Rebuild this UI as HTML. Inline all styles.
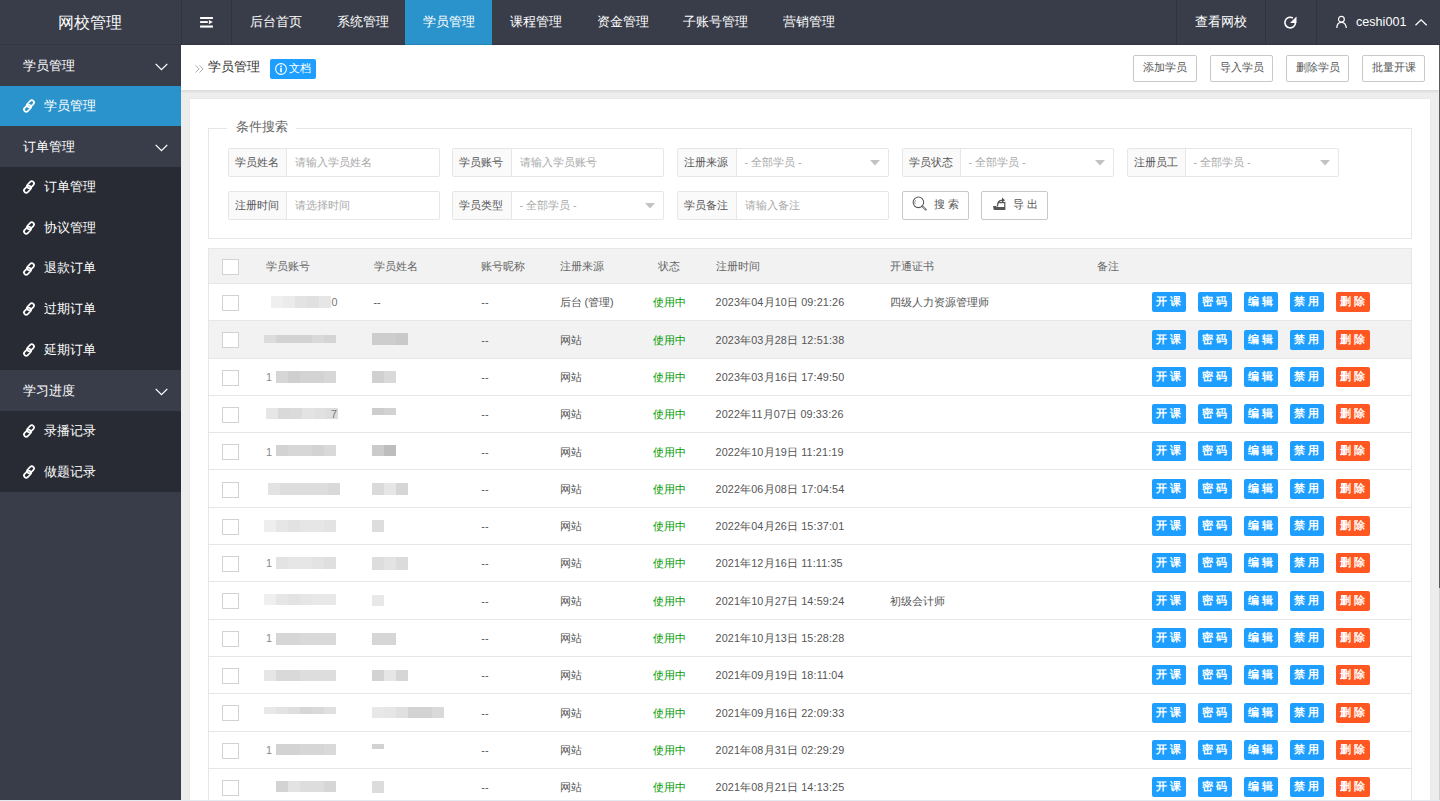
<!DOCTYPE html>
<html><head><meta charset="utf-8"><title>网校管理</title>
<style>
html,body{margin:0;padding:0;}
body{width:1440px;height:801px;overflow:hidden;position:relative;background:#EDEDED;font-family:"Liberation Sans", sans-serif;}
.ab{position:absolute;}
.t{position:absolute;white-space:nowrap;line-height:1;}
svg{position:absolute;overflow:visible;}
</style></head><body>

<div class="ab" style="left:0;top:0;width:1440px;height:45px;background:#393D49;"></div>
<div class="t" style="left:-1px;width:181px;text-align:center;top:14px;font-size:16.4px;color:#fff;">网校管理</div>
<div class="ab" style="left:181px;top:0;width:1px;height:45px;background:#30343e;"></div>
<div class="ab" style="left:231px;top:0;width:1px;height:45px;background:#30343e;"></div>
<div class="ab" style="left:1176px;top:0;width:1px;height:45px;background:#30343e;"></div>
<div class="ab" style="left:1265px;top:0;width:1px;height:45px;background:#30343e;"></div>
<div class="ab" style="left:1316px;top:0;width:1px;height:45px;background:#30343e;"></div>
<svg style="left:200px;top:16px" width="14" height="13" viewBox="0 0 14 13"><rect x="0.1" y="1" width="12.8" height="2" fill="#fff"/><rect x="0.1" y="5.1" width="7.7" height="1.9" fill="#fff"/><path d="M8.9 3.9 L12.8 6.05 L8.9 8.2Z" fill="#fff"/><rect x="0.1" y="9.5" width="12.8" height="2.1" fill="#fff"/></svg>
<div class="ab" style="left:405px;top:0;width:87px;height:45px;background:#2A93CC;"></div>
<div class="t" style="left:250px;top:15.5px;font-size:12.6px;color:#fff;">后台首页</div>
<div class="t" style="left:336.7px;top:15.5px;font-size:12.6px;color:#fff;">系统管理</div>
<div class="t" style="left:423.3px;top:15.5px;font-size:12.6px;color:#fff;">学员管理</div>
<div class="t" style="left:510px;top:15.5px;font-size:12.6px;color:#fff;">课程管理</div>
<div class="t" style="left:596.7px;top:15.5px;font-size:12.6px;color:#fff;">资金管理</div>
<div class="t" style="left:683.3px;top:15.5px;font-size:12.6px;color:#fff;">子账号管理</div>
<div class="t" style="left:782.7px;top:15.5px;font-size:12.6px;color:#fff;">营销管理</div>
<div class="ab" style="left:0;top:44px;width:1440px;height:1px;background:rgba(0,0,0,.08);"></div>
<div class="t" style="left:1195px;top:15.5px;font-size:12.6px;color:#fff;">查看网校</div>
<svg style="left:1284px;top:15.5px" width="13" height="13" viewBox="0 0 13 13"><path d="M11.5 6.6 A5.3 5.3 0 1 1 8.85 2.0" fill="none" stroke="#fff" stroke-width="1.6"/><path d="M6.0 6.9 L12.5 0.4 L12.5 6.9Z" fill="#fff"/></svg>
<svg style="left:1336px;top:15px" width="12" height="14" viewBox="0 0 12 14"><circle cx="5.4" cy="4.2" r="2.9" fill="none" stroke="#fff" stroke-width="1.2"/><path d="M0.8 13 C0.9 9.4 2.6 7.3 5.4 7.3 C8.2 7.3 9.9 9.4 10.4 13" fill="none" stroke="#fff" stroke-width="1.2"/></svg>
<div class="t" style="left:1356px;top:16.4px;font-size:12.6px;color:#fff;">ceshi001</div>
<svg style="left:1415px;top:19px" width="13" height="7" viewBox="0 0 13 7"><path d="M0.5 6.2 L6.1 0.8 L11.7 6.2" fill="none" stroke="#fff" stroke-width="1.3"/></svg>
<div class="ab" style="left:0;top:45px;width:181px;height:756px;background:#393D49;"></div>
<div class="ab" style="left:0;top:166.92px;width:181px;height:203.20px;background:#282B33;"></div>
<div class="ab" style="left:0;top:410.76px;width:181px;height:81.28px;background:#282B33;"></div>
<div class="ab" style="left:0;top:85.64px;width:181px;height:40.64px;background:#2A93CC;"></div>
<div class="t" style="left:22.7px;top:60.20px;font-size:12.6px;color:#fff;">学员管理</div>
<svg style="left:155px;top:63.00px" width="13" height="8" viewBox="0 0 13 8"><path d="M0.7 0.9 L6.5 6.7 L12.3 0.9" fill="none" stroke="#fff" stroke-width="1.3"/></svg>
<svg style="left:22px;top:99.14px" width="14" height="14" viewBox="0 0 14 14"><rect x="-4" y="-2.2" width="8" height="4.4" rx="2.2" transform="translate(5.5 9.2) rotate(-45)" fill="none" stroke="#fff" stroke-width="1.7"/><rect x="-4" y="-2.2" width="8" height="4.4" rx="2.2" transform="translate(8.5 4.8) rotate(-45)" fill="none" stroke="#fff" stroke-width="1.7"/></svg>
<div class="t" style="left:43.5px;top:99.84px;font-size:12.6px;color:#fff;">学员管理</div>
<div class="t" style="left:22.7px;top:141.48px;font-size:12.6px;color:#fff;">订单管理</div>
<svg style="left:155px;top:144.28px" width="13" height="8" viewBox="0 0 13 8"><path d="M0.7 0.9 L6.5 6.7 L12.3 0.9" fill="none" stroke="#fff" stroke-width="1.3"/></svg>
<svg style="left:22px;top:180.42px" width="14" height="14" viewBox="0 0 14 14"><rect x="-4" y="-2.2" width="8" height="4.4" rx="2.2" transform="translate(5.5 9.2) rotate(-45)" fill="none" stroke="#fff" stroke-width="1.7"/><rect x="-4" y="-2.2" width="8" height="4.4" rx="2.2" transform="translate(8.5 4.8) rotate(-45)" fill="none" stroke="#fff" stroke-width="1.7"/></svg>
<div class="t" style="left:43.5px;top:181.12px;font-size:12.6px;color:#fff;">订单管理</div>
<svg style="left:22px;top:221.06px" width="14" height="14" viewBox="0 0 14 14"><rect x="-4" y="-2.2" width="8" height="4.4" rx="2.2" transform="translate(5.5 9.2) rotate(-45)" fill="none" stroke="#fff" stroke-width="1.7"/><rect x="-4" y="-2.2" width="8" height="4.4" rx="2.2" transform="translate(8.5 4.8) rotate(-45)" fill="none" stroke="#fff" stroke-width="1.7"/></svg>
<div class="t" style="left:43.5px;top:221.76px;font-size:12.6px;color:#fff;">协议管理</div>
<svg style="left:22px;top:261.70px" width="14" height="14" viewBox="0 0 14 14"><rect x="-4" y="-2.2" width="8" height="4.4" rx="2.2" transform="translate(5.5 9.2) rotate(-45)" fill="none" stroke="#fff" stroke-width="1.7"/><rect x="-4" y="-2.2" width="8" height="4.4" rx="2.2" transform="translate(8.5 4.8) rotate(-45)" fill="none" stroke="#fff" stroke-width="1.7"/></svg>
<div class="t" style="left:43.5px;top:262.40px;font-size:12.6px;color:#fff;">退款订单</div>
<svg style="left:22px;top:302.34px" width="14" height="14" viewBox="0 0 14 14"><rect x="-4" y="-2.2" width="8" height="4.4" rx="2.2" transform="translate(5.5 9.2) rotate(-45)" fill="none" stroke="#fff" stroke-width="1.7"/><rect x="-4" y="-2.2" width="8" height="4.4" rx="2.2" transform="translate(8.5 4.8) rotate(-45)" fill="none" stroke="#fff" stroke-width="1.7"/></svg>
<div class="t" style="left:43.5px;top:303.04px;font-size:12.6px;color:#fff;">过期订单</div>
<svg style="left:22px;top:342.98px" width="14" height="14" viewBox="0 0 14 14"><rect x="-4" y="-2.2" width="8" height="4.4" rx="2.2" transform="translate(5.5 9.2) rotate(-45)" fill="none" stroke="#fff" stroke-width="1.7"/><rect x="-4" y="-2.2" width="8" height="4.4" rx="2.2" transform="translate(8.5 4.8) rotate(-45)" fill="none" stroke="#fff" stroke-width="1.7"/></svg>
<div class="t" style="left:43.5px;top:343.68px;font-size:12.6px;color:#fff;">延期订单</div>
<div class="t" style="left:22.7px;top:385.32px;font-size:12.6px;color:#fff;">学习进度</div>
<svg style="left:155px;top:388.12px" width="13" height="8" viewBox="0 0 13 8"><path d="M0.7 0.9 L6.5 6.7 L12.3 0.9" fill="none" stroke="#fff" stroke-width="1.3"/></svg>
<svg style="left:22px;top:424.26px" width="14" height="14" viewBox="0 0 14 14"><rect x="-4" y="-2.2" width="8" height="4.4" rx="2.2" transform="translate(5.5 9.2) rotate(-45)" fill="none" stroke="#fff" stroke-width="1.7"/><rect x="-4" y="-2.2" width="8" height="4.4" rx="2.2" transform="translate(8.5 4.8) rotate(-45)" fill="none" stroke="#fff" stroke-width="1.7"/></svg>
<div class="t" style="left:43.5px;top:424.96px;font-size:12.6px;color:#fff;">录播记录</div>
<svg style="left:22px;top:464.90px" width="14" height="14" viewBox="0 0 14 14"><rect x="-4" y="-2.2" width="8" height="4.4" rx="2.2" transform="translate(5.5 9.2) rotate(-45)" fill="none" stroke="#fff" stroke-width="1.7"/><rect x="-4" y="-2.2" width="8" height="4.4" rx="2.2" transform="translate(8.5 4.8) rotate(-45)" fill="none" stroke="#fff" stroke-width="1.7"/></svg>
<div class="t" style="left:43.5px;top:465.60px;font-size:12.6px;color:#fff;">做题记录</div>
<div class="ab" style="left:181px;top:45px;width:1258px;height:45px;background:#fff;box-shadow:0 1px 3px rgba(0,0,0,.12);"></div>
<div class="ab" style="left:1439px;top:45px;width:1px;height:543px;background:#5a5a5a;"></div>
<div class="ab" style="left:1439px;top:588px;width:1px;height:213px;background:#cfcfcf;"></div>
<svg style="left:194.5px;top:65px" width="9" height="8" viewBox="0 0 9 8"><path d="M0.5 0.3 L4 3.9 L0.5 7.5 M4.5 0.3 L8 3.9 L4.5 7.5" fill="none" stroke="#AAA" stroke-width="1"/></svg>
<div class="t" style="left:208px;top:61px;font-size:12.6px;color:#333;">学员管理</div>
<div class="ab" style="left:270px;top:59px;width:46px;height:20px;background:#1E9FFF;border-radius:2px;"></div>
<svg style="left:274.5px;top:63px" width="12" height="12" viewBox="0 0 12 12"><circle cx="6" cy="6" r="5.4" fill="none" stroke="#fff" stroke-width="1.1"/><circle cx="6" cy="3.4" r="0.9" fill="#fff"/><rect x="5.2" y="5" width="1.6" height="4.2" fill="#fff"/></svg>
<div class="t" style="left:289px;top:63px;font-size:11.2px;color:#fff;">文档</div>
<div class="ab" style="left:1133px;top:55px;width:62px;height:25px;border:1px solid #C9C9C9;border-radius:2px;background:#fff;"></div>
<div class="t" style="left:1133px;width:64px;text-align:center;top:62px;font-size:10.8px;color:#555;">添加学员</div>
<div class="ab" style="left:1210px;top:55px;width:61px;height:25px;border:1px solid #C9C9C9;border-radius:2px;background:#fff;"></div>
<div class="t" style="left:1210px;width:63px;text-align:center;top:62px;font-size:10.8px;color:#555;">导入学员</div>
<div class="ab" style="left:1286px;top:55px;width:61px;height:25px;border:1px solid #C9C9C9;border-radius:2px;background:#fff;"></div>
<div class="t" style="left:1286px;width:63px;text-align:center;top:62px;font-size:10.8px;color:#555;">删除学员</div>
<div class="ab" style="left:1362px;top:55px;width:61px;height:25px;border:1px solid #C9C9C9;border-radius:2px;background:#fff;"></div>
<div class="t" style="left:1362px;width:63px;text-align:center;top:62px;font-size:10.8px;color:#555;">批量开课</div>
<div class="ab" style="left:190px;top:99px;width:1240px;height:702px;background:#fff;box-shadow:0 0 2px rgba(0,0,0,.05);"></div>
<div class="ab" style="left:208px;top:128px;width:1202px;height:109px;border:1px solid #E6E6E6;"></div>
<div class="ab" style="left:227px;top:120px;width:69px;height:12px;background:#fff;"></div>
<div class="t" style="left:236px;top:120.5px;font-size:12.6px;color:#666;">条件搜索</div>
<div class="ab" style="left:228px;top:148px;width:210px;height:27px;border:1px solid #E6E6E6;border-radius:2px;background:#fff;"></div>
<div class="ab" style="left:229px;top:149px;width:57px;height:27px;background:#FAFAFA;border-right:1px solid #E6E6E6;"></div>
<div class="t" style="left:235.3px;top:156.6px;font-size:10.8px;color:#555;">学员姓名</div>
<div class="t" style="left:294.5px;top:156.8px;font-size:10.8px;color:#A9A9A9;">请输入学员姓名</div>
<div class="ab" style="left:452px;top:148px;width:210px;height:27px;border:1px solid #E6E6E6;border-radius:2px;background:#fff;"></div>
<div class="ab" style="left:453px;top:149px;width:58px;height:27px;background:#FAFAFA;border-right:1px solid #E6E6E6;"></div>
<div class="t" style="left:459.3px;top:156.6px;font-size:10.8px;color:#555;">学员账号</div>
<div class="t" style="left:519.5px;top:156.8px;font-size:10.8px;color:#A9A9A9;">请输入学员账号</div>
<div class="ab" style="left:677px;top:148px;width:210px;height:27px;border:1px solid #E6E6E6;border-radius:2px;background:#fff;"></div>
<div class="ab" style="left:678px;top:149px;width:58px;height:27px;background:#FAFAFA;border-right:1px solid #E6E6E6;"></div>
<div class="t" style="left:684.3px;top:156.6px;font-size:10.8px;color:#555;">注册来源</div>
<div class="t" style="left:744.5px;top:156.8px;font-size:10.8px;color:#A9A9A9;">- 全部学员 -</div>
<svg style="left:870px;top:160px" width="10" height="6" viewBox="0 0 10 6"><path d="M0 0 L10 0 L5 5.5Z" fill="#C2C2C2"/></svg>
<div class="ab" style="left:902px;top:148px;width:210px;height:27px;border:1px solid #E6E6E6;border-radius:2px;background:#fff;"></div>
<div class="ab" style="left:903px;top:149px;width:57px;height:27px;background:#FAFAFA;border-right:1px solid #E6E6E6;"></div>
<div class="t" style="left:909.3px;top:156.6px;font-size:10.8px;color:#555;">学员状态</div>
<div class="t" style="left:968.5px;top:156.8px;font-size:10.8px;color:#A9A9A9;">- 全部学员 -</div>
<svg style="left:1095px;top:160px" width="10" height="6" viewBox="0 0 10 6"><path d="M0 0 L10 0 L5 5.5Z" fill="#C2C2C2"/></svg>
<div class="ab" style="left:1127px;top:148px;width:210px;height:27px;border:1px solid #E6E6E6;border-radius:2px;background:#fff;"></div>
<div class="ab" style="left:1128px;top:149px;width:57px;height:27px;background:#FAFAFA;border-right:1px solid #E6E6E6;"></div>
<div class="t" style="left:1134.3px;top:156.6px;font-size:10.8px;color:#555;">注册员工</div>
<div class="t" style="left:1193.5px;top:156.8px;font-size:10.8px;color:#A9A9A9;">- 全部学员 -</div>
<svg style="left:1320px;top:160px" width="10" height="6" viewBox="0 0 10 6"><path d="M0 0 L10 0 L5 5.5Z" fill="#C2C2C2"/></svg>
<div class="ab" style="left:228px;top:191px;width:210px;height:27px;border:1px solid #E6E6E6;border-radius:2px;background:#fff;"></div>
<div class="ab" style="left:229px;top:192px;width:57px;height:27px;background:#FAFAFA;border-right:1px solid #E6E6E6;"></div>
<div class="t" style="left:235.3px;top:199.6px;font-size:10.8px;color:#555;">注册时间</div>
<div class="t" style="left:294.5px;top:199.8px;font-size:10.8px;color:#A9A9A9;">请选择时间</div>
<div class="ab" style="left:452px;top:191px;width:210px;height:27px;border:1px solid #E6E6E6;border-radius:2px;background:#fff;"></div>
<div class="ab" style="left:453px;top:192px;width:58px;height:27px;background:#FAFAFA;border-right:1px solid #E6E6E6;"></div>
<div class="t" style="left:459.3px;top:199.6px;font-size:10.8px;color:#555;">学员类型</div>
<div class="t" style="left:519.5px;top:199.8px;font-size:10.8px;color:#A9A9A9;">- 全部学员 -</div>
<svg style="left:645px;top:203px" width="10" height="6" viewBox="0 0 10 6"><path d="M0 0 L10 0 L5 5.5Z" fill="#C2C2C2"/></svg>
<div class="ab" style="left:677px;top:191px;width:210px;height:27px;border:1px solid #E6E6E6;border-radius:2px;background:#fff;"></div>
<div class="ab" style="left:678px;top:192px;width:58px;height:27px;background:#FAFAFA;border-right:1px solid #E6E6E6;"></div>
<div class="t" style="left:684.3px;top:199.6px;font-size:10.8px;color:#555;">学员备注</div>
<div class="t" style="left:744.5px;top:199.8px;font-size:10.8px;color:#A9A9A9;">请输入备注</div>
<div class="ab" style="left:902px;top:191px;width:65px;height:27px;border:1px solid #C9C9C9;border-radius:2px;background:#fff;"></div>
<div class="ab" style="left:981px;top:191px;width:65px;height:27px;border:1px solid #C9C9C9;border-radius:2px;background:#fff;"></div>
<svg style="left:912px;top:196px" width="15" height="15" viewBox="0 0 15 15"><circle cx="6.4" cy="6.3" r="5.3" fill="none" stroke="#555" stroke-width="1.05"/><path d="M3.3 8.2 A3.4 3.4 0 0 1 3.6 4.2" fill="none" stroke="#777" stroke-width="0.8"/><path d="M10.2 10.1 L13.8 13.6" stroke="#666" stroke-width="2" stroke-linecap="round"/><path d="M10.6 10.5 L13.4 13.2" stroke="#ddd" stroke-width="0.7"/></svg>
<div class="t" style="left:934px;top:198.5px;font-size:10.8px;color:#555;letter-spacing:3px;">搜索</div>
<svg style="left:993px;top:197px" width="13" height="14" viewBox="0 0 13 14"><path d="M0 9 L3.2 9 L3.6 10 L12.4 10 L12.4 13 L0.8 13 Z" fill="#555"/><path d="M6.2 5.6 L11.8 5.6 L11.8 10" fill="none" stroke="#555" stroke-width="1.2"/><path d="M4.4 9.6 C4.4 5.6 5.8 3.2 9.4 3.2" fill="none" stroke="#555" stroke-width="1.4"/><path d="M9 0.6 L12 3.2 L9 5.8Z" fill="#555"/></svg>
<div class="t" style="left:1013px;top:198.5px;font-size:10.8px;color:#555;letter-spacing:3px;">导出</div>
<div class="ab" style="left:208px;top:248px;width:1202px;height:560px;border:1px solid #E6E6E6;"></div>
<div class="ab" style="left:209px;top:249px;width:1202px;height:34px;background:#F2F2F2;border-bottom:1px solid #E6E6E6;"></div>
<div class="ab" style="left:222px;top:259px;width:15px;height:14px;border:1px solid #D2D2D2;background:#fff;"></div>
<div class="t" style="left:265.9px;top:260.8px;font-size:10.8px;color:#666;">学员账号</div>
<div class="t" style="left:373.5px;top:260.8px;font-size:10.8px;color:#666;">学员姓名</div>
<div class="t" style="left:481.3px;top:260.8px;font-size:10.8px;color:#666;">账号昵称</div>
<div class="t" style="left:559.5px;top:260.8px;font-size:10.8px;color:#666;">注册来源</div>
<div class="t" style="left:657.7px;top:260.8px;font-size:10.8px;color:#666;">状态</div>
<div class="t" style="left:715.5px;top:260.8px;font-size:10.8px;color:#666;">注册时间</div>
<div class="t" style="left:890px;top:260.8px;font-size:10.8px;color:#666;">开通证书</div>
<div class="t" style="left:1097px;top:260.8px;font-size:10.8px;color:#666;">备注</div>
<div class="ab" style="left:209px;top:284.00px;width:1202px;height:36.30px;background:#fff;border-bottom:1px solid #E6E6E6;"></div>
<div class="ab" style="left:222px;top:295px;width:15px;height:14px;border:1px solid #D2D2D2;background:#fff;"></div>
<div class="ab" style="left:271px;top:296.00px;width:12px;height:12px;background:#EFEFEF;"></div>
<div class="ab" style="left:283px;top:296.00px;width:12px;height:12px;background:#EBEBEB;"></div>
<div class="ab" style="left:295px;top:296.00px;width:12px;height:12px;background:#E3E3E3;"></div>
<div class="ab" style="left:307px;top:296.00px;width:12px;height:12px;background:#E0E0E0;"></div>
<div class="ab" style="left:319px;top:296.00px;width:12px;height:12px;background:#E6E6E6;"></div>
<div class="t" style="left:331.5px;top:297.30px;font-size:10.8px;color:#777;">0</div>
<div class="t" style="left:373.5px;top:297.30px;font-size:10.8px;color:#555;">--</div>
<div class="t" style="left:481.3px;top:297.30px;font-size:10.8px;color:#555;">--</div>
<div class="t" style="left:559.5px;top:297.30px;font-size:10.8px;color:#555;">后台 (管理)</div>
<div class="t" style="left:652.6px;top:297.30px;font-size:10.8px;color:#009900;">使用中</div>
<div class="t" style="left:715.5px;top:297.30px;font-size:10.8px;color:#555;letter-spacing:0.14px;">2023年04月10日 09:21:26</div>
<div class="t" style="left:890px;top:297.30px;font-size:10.8px;color:#555;">四级人力资源管理师</div>
<div class="ab" style="left:1152px;top:292px;width:34px;height:20px;background:#1E9FFF;border-radius:2px;"></div>
<div class="t" style="left:1156px;top:295.6px;font-size:10.8px;color:#fff;letter-spacing:3px;font-weight:bold;">开课</div>
<div class="ab" style="left:1198px;top:292px;width:34px;height:20px;background:#1E9FFF;border-radius:2px;"></div>
<div class="t" style="left:1202px;top:295.6px;font-size:10.8px;color:#fff;letter-spacing:3px;font-weight:bold;">密码</div>
<div class="ab" style="left:1244px;top:292px;width:34px;height:20px;background:#1E9FFF;border-radius:2px;"></div>
<div class="t" style="left:1248px;top:295.6px;font-size:10.8px;color:#fff;letter-spacing:3px;font-weight:bold;">编辑</div>
<div class="ab" style="left:1290px;top:292px;width:34px;height:20px;background:#1E9FFF;border-radius:2px;"></div>
<div class="t" style="left:1294px;top:295.6px;font-size:10.8px;color:#fff;letter-spacing:3px;font-weight:bold;">禁用</div>
<div class="ab" style="left:1336px;top:292px;width:34px;height:20px;background:#FF5722;border-radius:2px;"></div>
<div class="t" style="left:1340px;top:295.6px;font-size:10.8px;color:#fff;letter-spacing:3px;font-weight:bold;">删除</div>
<div class="ab" style="left:209px;top:321.30px;width:1202px;height:36.30px;background:#F2F2F2;border-bottom:1px solid #E6E6E6;"></div>
<div class="ab" style="left:222px;top:332px;width:15px;height:14px;border:1px solid #D2D2D2;background:#fff;"></div>
<div class="ab" style="left:264px;top:335.30px;width:12px;height:8px;background:#DCDCDC;"></div>
<div class="ab" style="left:276px;top:335.30px;width:12px;height:8px;background:#D3D3D3;"></div>
<div class="ab" style="left:288px;top:335.30px;width:12px;height:8px;background:#D3D3D3;"></div>
<div class="ab" style="left:300px;top:335.30px;width:12px;height:8px;background:#D3D3D3;"></div>
<div class="ab" style="left:312px;top:335.30px;width:12px;height:8px;background:#D9D9D9;"></div>
<div class="ab" style="left:324px;top:335.30px;width:12px;height:8px;background:#D5D5D5;"></div>
<div class="ab" style="left:372px;top:333.30px;width:12px;height:12px;background:#CDCDCD;"></div>
<div class="ab" style="left:384px;top:333.30px;width:12px;height:12px;background:#CDCDCD;"></div>
<div class="ab" style="left:396px;top:333.30px;width:12px;height:12px;background:#C9C9C9;"></div>
<div class="t" style="left:481.3px;top:334.60px;font-size:10.8px;color:#555;">--</div>
<div class="t" style="left:559.5px;top:334.60px;font-size:10.8px;color:#555;">网站</div>
<div class="t" style="left:652.6px;top:334.60px;font-size:10.8px;color:#009900;">使用中</div>
<div class="t" style="left:715.5px;top:334.60px;font-size:10.8px;color:#555;letter-spacing:0.14px;">2023年03月28日 12:51:38</div>
<div class="ab" style="left:1152px;top:330px;width:34px;height:20px;background:#1E9FFF;border-radius:2px;"></div>
<div class="t" style="left:1156px;top:333.6px;font-size:10.8px;color:#fff;letter-spacing:3px;font-weight:bold;">开课</div>
<div class="ab" style="left:1198px;top:330px;width:34px;height:20px;background:#1E9FFF;border-radius:2px;"></div>
<div class="t" style="left:1202px;top:333.6px;font-size:10.8px;color:#fff;letter-spacing:3px;font-weight:bold;">密码</div>
<div class="ab" style="left:1244px;top:330px;width:34px;height:20px;background:#1E9FFF;border-radius:2px;"></div>
<div class="t" style="left:1248px;top:333.6px;font-size:10.8px;color:#fff;letter-spacing:3px;font-weight:bold;">编辑</div>
<div class="ab" style="left:1290px;top:330px;width:34px;height:20px;background:#1E9FFF;border-radius:2px;"></div>
<div class="t" style="left:1294px;top:333.6px;font-size:10.8px;color:#fff;letter-spacing:3px;font-weight:bold;">禁用</div>
<div class="ab" style="left:1336px;top:330px;width:34px;height:20px;background:#FF5722;border-radius:2px;"></div>
<div class="t" style="left:1340px;top:333.6px;font-size:10.8px;color:#fff;letter-spacing:3px;font-weight:bold;">删除</div>
<div class="ab" style="left:209px;top:358.60px;width:1202px;height:36.30px;background:#fff;border-bottom:1px solid #E6E6E6;"></div>
<div class="ab" style="left:222px;top:370px;width:15px;height:14px;border:1px solid #D2D2D2;background:#fff;"></div>
<div class="ab" style="left:276px;top:370.60px;width:12px;height:12px;background:#D6D6D6;"></div>
<div class="ab" style="left:288px;top:370.60px;width:12px;height:12px;background:#CFCFCF;"></div>
<div class="ab" style="left:300px;top:370.60px;width:12px;height:12px;background:#D3D3D3;"></div>
<div class="ab" style="left:312px;top:370.60px;width:12px;height:12px;background:#D3D3D3;"></div>
<div class="ab" style="left:324px;top:370.60px;width:12px;height:12px;background:#D7D7D7;"></div>
<div class="t" style="left:266px;top:371.90px;font-size:10.8px;color:#888;">1</div>
<div class="ab" style="left:372px;top:370.60px;width:12px;height:12px;background:#D0D0D0;"></div>
<div class="ab" style="left:384px;top:370.60px;width:12px;height:12px;background:#D9D9D9;"></div>
<div class="t" style="left:481.3px;top:371.90px;font-size:10.8px;color:#555;">--</div>
<div class="t" style="left:559.5px;top:371.90px;font-size:10.8px;color:#555;">网站</div>
<div class="t" style="left:652.6px;top:371.90px;font-size:10.8px;color:#009900;">使用中</div>
<div class="t" style="left:715.5px;top:371.90px;font-size:10.8px;color:#555;letter-spacing:0.14px;">2023年03月16日 17:49:50</div>
<div class="ab" style="left:1152px;top:367px;width:34px;height:20px;background:#1E9FFF;border-radius:2px;"></div>
<div class="t" style="left:1156px;top:370.6px;font-size:10.8px;color:#fff;letter-spacing:3px;font-weight:bold;">开课</div>
<div class="ab" style="left:1198px;top:367px;width:34px;height:20px;background:#1E9FFF;border-radius:2px;"></div>
<div class="t" style="left:1202px;top:370.6px;font-size:10.8px;color:#fff;letter-spacing:3px;font-weight:bold;">密码</div>
<div class="ab" style="left:1244px;top:367px;width:34px;height:20px;background:#1E9FFF;border-radius:2px;"></div>
<div class="t" style="left:1248px;top:370.6px;font-size:10.8px;color:#fff;letter-spacing:3px;font-weight:bold;">编辑</div>
<div class="ab" style="left:1290px;top:367px;width:34px;height:20px;background:#1E9FFF;border-radius:2px;"></div>
<div class="t" style="left:1294px;top:370.6px;font-size:10.8px;color:#fff;letter-spacing:3px;font-weight:bold;">禁用</div>
<div class="ab" style="left:1336px;top:367px;width:34px;height:20px;background:#FF5722;border-radius:2px;"></div>
<div class="t" style="left:1340px;top:370.6px;font-size:10.8px;color:#fff;letter-spacing:3px;font-weight:bold;">删除</div>
<div class="ab" style="left:209px;top:395.90px;width:1202px;height:36.30px;background:#fff;border-bottom:1px solid #E6E6E6;"></div>
<div class="ab" style="left:222px;top:407px;width:15px;height:14px;border:1px solid #D2D2D2;background:#fff;"></div>
<div class="ab" style="left:266px;top:407.90px;width:12px;height:11px;background:#E6E6E6;"></div>
<div class="ab" style="left:278px;top:407.90px;width:12px;height:11px;background:#D9D9D9;"></div>
<div class="ab" style="left:290px;top:407.90px;width:12px;height:11px;background:#DBDBDB;"></div>
<div class="ab" style="left:302px;top:407.90px;width:12px;height:11px;background:#E3E3E3;"></div>
<div class="ab" style="left:314px;top:407.90px;width:12px;height:11px;background:#E0E0E0;"></div>
<div class="ab" style="left:326px;top:407.90px;width:12px;height:11px;background:#DDDDDD;"></div>
<div class="t" style="left:331px;top:409.20px;font-size:10.8px;color:#777;">7</div>
<div class="ab" style="left:372px;top:407.90px;width:12px;height:7px;background:#CDCDCD;"></div>
<div class="ab" style="left:384px;top:407.90px;width:12px;height:7px;background:#D2D2D2;"></div>
<div class="t" style="left:481.3px;top:409.20px;font-size:10.8px;color:#555;">--</div>
<div class="t" style="left:559.5px;top:409.20px;font-size:10.8px;color:#555;">网站</div>
<div class="t" style="left:652.6px;top:409.20px;font-size:10.8px;color:#009900;">使用中</div>
<div class="t" style="left:715.5px;top:409.20px;font-size:10.8px;color:#555;letter-spacing:0.14px;">2022年11月07日 09:33:26</div>
<div class="ab" style="left:1152px;top:404px;width:34px;height:20px;background:#1E9FFF;border-radius:2px;"></div>
<div class="t" style="left:1156px;top:407.6px;font-size:10.8px;color:#fff;letter-spacing:3px;font-weight:bold;">开课</div>
<div class="ab" style="left:1198px;top:404px;width:34px;height:20px;background:#1E9FFF;border-radius:2px;"></div>
<div class="t" style="left:1202px;top:407.6px;font-size:10.8px;color:#fff;letter-spacing:3px;font-weight:bold;">密码</div>
<div class="ab" style="left:1244px;top:404px;width:34px;height:20px;background:#1E9FFF;border-radius:2px;"></div>
<div class="t" style="left:1248px;top:407.6px;font-size:10.8px;color:#fff;letter-spacing:3px;font-weight:bold;">编辑</div>
<div class="ab" style="left:1290px;top:404px;width:34px;height:20px;background:#1E9FFF;border-radius:2px;"></div>
<div class="t" style="left:1294px;top:407.6px;font-size:10.8px;color:#fff;letter-spacing:3px;font-weight:bold;">禁用</div>
<div class="ab" style="left:1336px;top:404px;width:34px;height:20px;background:#FF5722;border-radius:2px;"></div>
<div class="t" style="left:1340px;top:407.6px;font-size:10.8px;color:#fff;letter-spacing:3px;font-weight:bold;">删除</div>
<div class="ab" style="left:209px;top:433.20px;width:1202px;height:36.30px;background:#fff;border-bottom:1px solid #E6E6E6;"></div>
<div class="ab" style="left:222px;top:444px;width:15px;height:14px;border:1px solid #D2D2D2;background:#fff;"></div>
<div class="ab" style="left:276px;top:445.20px;width:12px;height:11px;background:#D3D3D3;"></div>
<div class="ab" style="left:288px;top:445.20px;width:12px;height:11px;background:#D7D7D7;"></div>
<div class="ab" style="left:300px;top:445.20px;width:12px;height:11px;background:#D7D7D7;"></div>
<div class="ab" style="left:312px;top:445.20px;width:12px;height:11px;background:#D3D3D3;"></div>
<div class="ab" style="left:324px;top:445.20px;width:12px;height:11px;background:#D9D9D9;"></div>
<div class="t" style="left:266px;top:446.50px;font-size:10.8px;color:#888;">1</div>
<div class="ab" style="left:372px;top:445.20px;width:12px;height:11px;background:#CBCBCB;"></div>
<div class="ab" style="left:384px;top:445.20px;width:12px;height:11px;background:#BDBDBD;"></div>
<div class="t" style="left:481.3px;top:446.50px;font-size:10.8px;color:#555;">--</div>
<div class="t" style="left:559.5px;top:446.50px;font-size:10.8px;color:#555;">网站</div>
<div class="t" style="left:652.6px;top:446.50px;font-size:10.8px;color:#009900;">使用中</div>
<div class="t" style="left:715.5px;top:446.50px;font-size:10.8px;color:#555;letter-spacing:0.14px;">2022年10月19日 11:21:19</div>
<div class="ab" style="left:1152px;top:441px;width:34px;height:20px;background:#1E9FFF;border-radius:2px;"></div>
<div class="t" style="left:1156px;top:444.6px;font-size:10.8px;color:#fff;letter-spacing:3px;font-weight:bold;">开课</div>
<div class="ab" style="left:1198px;top:441px;width:34px;height:20px;background:#1E9FFF;border-radius:2px;"></div>
<div class="t" style="left:1202px;top:444.6px;font-size:10.8px;color:#fff;letter-spacing:3px;font-weight:bold;">密码</div>
<div class="ab" style="left:1244px;top:441px;width:34px;height:20px;background:#1E9FFF;border-radius:2px;"></div>
<div class="t" style="left:1248px;top:444.6px;font-size:10.8px;color:#fff;letter-spacing:3px;font-weight:bold;">编辑</div>
<div class="ab" style="left:1290px;top:441px;width:34px;height:20px;background:#1E9FFF;border-radius:2px;"></div>
<div class="t" style="left:1294px;top:444.6px;font-size:10.8px;color:#fff;letter-spacing:3px;font-weight:bold;">禁用</div>
<div class="ab" style="left:1336px;top:441px;width:34px;height:20px;background:#FF5722;border-radius:2px;"></div>
<div class="t" style="left:1340px;top:444.6px;font-size:10.8px;color:#fff;letter-spacing:3px;font-weight:bold;">删除</div>
<div class="ab" style="left:209px;top:470.50px;width:1202px;height:36.30px;background:#fff;border-bottom:1px solid #E6E6E6;"></div>
<div class="ab" style="left:222px;top:482px;width:15px;height:14px;border:1px solid #D2D2D2;background:#fff;"></div>
<div class="ab" style="left:268px;top:482.50px;width:12px;height:12px;background:#E3E3E3;"></div>
<div class="ab" style="left:280px;top:482.50px;width:12px;height:12px;background:#DDDDDD;"></div>
<div class="ab" style="left:292px;top:482.50px;width:12px;height:12px;background:#DDDDDD;"></div>
<div class="ab" style="left:304px;top:482.50px;width:12px;height:12px;background:#DDDDDD;"></div>
<div class="ab" style="left:316px;top:482.50px;width:12px;height:12px;background:#DDDDDD;"></div>
<div class="ab" style="left:328px;top:482.50px;width:12px;height:12px;background:#D9D9D9;"></div>
<div class="ab" style="left:372px;top:482.50px;width:12px;height:12px;background:#DADADA;"></div>
<div class="ab" style="left:384px;top:482.50px;width:12px;height:12px;background:#E6E6E6;"></div>
<div class="ab" style="left:396px;top:482.50px;width:12px;height:12px;background:#D6D6D6;"></div>
<div class="t" style="left:481.3px;top:483.80px;font-size:10.8px;color:#555;">--</div>
<div class="t" style="left:559.5px;top:483.80px;font-size:10.8px;color:#555;">网站</div>
<div class="t" style="left:652.6px;top:483.80px;font-size:10.8px;color:#009900;">使用中</div>
<div class="t" style="left:715.5px;top:483.80px;font-size:10.8px;color:#555;letter-spacing:0.14px;">2022年06月08日 17:04:54</div>
<div class="ab" style="left:1152px;top:479px;width:34px;height:20px;background:#1E9FFF;border-radius:2px;"></div>
<div class="t" style="left:1156px;top:482.6px;font-size:10.8px;color:#fff;letter-spacing:3px;font-weight:bold;">开课</div>
<div class="ab" style="left:1198px;top:479px;width:34px;height:20px;background:#1E9FFF;border-radius:2px;"></div>
<div class="t" style="left:1202px;top:482.6px;font-size:10.8px;color:#fff;letter-spacing:3px;font-weight:bold;">密码</div>
<div class="ab" style="left:1244px;top:479px;width:34px;height:20px;background:#1E9FFF;border-radius:2px;"></div>
<div class="t" style="left:1248px;top:482.6px;font-size:10.8px;color:#fff;letter-spacing:3px;font-weight:bold;">编辑</div>
<div class="ab" style="left:1290px;top:479px;width:34px;height:20px;background:#1E9FFF;border-radius:2px;"></div>
<div class="t" style="left:1294px;top:482.6px;font-size:10.8px;color:#fff;letter-spacing:3px;font-weight:bold;">禁用</div>
<div class="ab" style="left:1336px;top:479px;width:34px;height:20px;background:#FF5722;border-radius:2px;"></div>
<div class="t" style="left:1340px;top:482.6px;font-size:10.8px;color:#fff;letter-spacing:3px;font-weight:bold;">删除</div>
<div class="ab" style="left:209px;top:507.80px;width:1202px;height:36.30px;background:#fff;border-bottom:1px solid #E6E6E6;"></div>
<div class="ab" style="left:222px;top:519px;width:15px;height:14px;border:1px solid #D2D2D2;background:#fff;"></div>
<div class="ab" style="left:264px;top:519.80px;width:12px;height:12px;background:#EEEEEE;"></div>
<div class="ab" style="left:276px;top:519.80px;width:12px;height:12px;background:#E6E6E6;"></div>
<div class="ab" style="left:288px;top:519.80px;width:12px;height:12px;background:#E2E2E2;"></div>
<div class="ab" style="left:300px;top:519.80px;width:12px;height:12px;background:#E6E6E6;"></div>
<div class="ab" style="left:312px;top:519.80px;width:12px;height:12px;background:#E6E6E6;"></div>
<div class="ab" style="left:324px;top:519.80px;width:12px;height:12px;background:#E3E3E3;"></div>
<div class="ab" style="left:372px;top:519.80px;width:12px;height:12px;background:#DDDDDD;"></div>
<div class="t" style="left:481.3px;top:521.10px;font-size:10.8px;color:#555;">--</div>
<div class="t" style="left:559.5px;top:521.10px;font-size:10.8px;color:#555;">网站</div>
<div class="t" style="left:652.6px;top:521.10px;font-size:10.8px;color:#009900;">使用中</div>
<div class="t" style="left:715.5px;top:521.10px;font-size:10.8px;color:#555;letter-spacing:0.14px;">2022年04月26日 15:37:01</div>
<div class="ab" style="left:1152px;top:516px;width:34px;height:20px;background:#1E9FFF;border-radius:2px;"></div>
<div class="t" style="left:1156px;top:519.6px;font-size:10.8px;color:#fff;letter-spacing:3px;font-weight:bold;">开课</div>
<div class="ab" style="left:1198px;top:516px;width:34px;height:20px;background:#1E9FFF;border-radius:2px;"></div>
<div class="t" style="left:1202px;top:519.6px;font-size:10.8px;color:#fff;letter-spacing:3px;font-weight:bold;">密码</div>
<div class="ab" style="left:1244px;top:516px;width:34px;height:20px;background:#1E9FFF;border-radius:2px;"></div>
<div class="t" style="left:1248px;top:519.6px;font-size:10.8px;color:#fff;letter-spacing:3px;font-weight:bold;">编辑</div>
<div class="ab" style="left:1290px;top:516px;width:34px;height:20px;background:#1E9FFF;border-radius:2px;"></div>
<div class="t" style="left:1294px;top:519.6px;font-size:10.8px;color:#fff;letter-spacing:3px;font-weight:bold;">禁用</div>
<div class="ab" style="left:1336px;top:516px;width:34px;height:20px;background:#FF5722;border-radius:2px;"></div>
<div class="t" style="left:1340px;top:519.6px;font-size:10.8px;color:#fff;letter-spacing:3px;font-weight:bold;">删除</div>
<div class="ab" style="left:209px;top:545.10px;width:1202px;height:36.30px;background:#fff;border-bottom:1px solid #E6E6E6;"></div>
<div class="ab" style="left:222px;top:556px;width:15px;height:14px;border:1px solid #D2D2D2;background:#fff;"></div>
<div class="ab" style="left:276px;top:557.10px;width:12px;height:12px;background:#E3E3E3;"></div>
<div class="ab" style="left:288px;top:557.10px;width:12px;height:12px;background:#E6E6E6;"></div>
<div class="ab" style="left:300px;top:557.10px;width:12px;height:12px;background:#E6E6E6;"></div>
<div class="ab" style="left:312px;top:557.10px;width:12px;height:12px;background:#E3E3E3;"></div>
<div class="ab" style="left:324px;top:557.10px;width:12px;height:12px;background:#DFDFDF;"></div>
<div class="t" style="left:266px;top:558.40px;font-size:10.8px;color:#888;">1</div>
<div class="ab" style="left:372px;top:557.10px;width:12px;height:13px;background:#DDDDDD;"></div>
<div class="ab" style="left:384px;top:557.10px;width:12px;height:13px;background:#E3E3E3;"></div>
<div class="ab" style="left:396px;top:557.10px;width:12px;height:13px;background:#DBDBDB;"></div>
<div class="t" style="left:481.3px;top:558.40px;font-size:10.8px;color:#555;">--</div>
<div class="t" style="left:559.5px;top:558.40px;font-size:10.8px;color:#555;">网站</div>
<div class="t" style="left:652.6px;top:558.40px;font-size:10.8px;color:#009900;">使用中</div>
<div class="t" style="left:715.5px;top:558.40px;font-size:10.8px;color:#555;letter-spacing:0.14px;">2021年12月16日 11:11:35</div>
<div class="ab" style="left:1152px;top:553px;width:34px;height:20px;background:#1E9FFF;border-radius:2px;"></div>
<div class="t" style="left:1156px;top:556.6px;font-size:10.8px;color:#fff;letter-spacing:3px;font-weight:bold;">开课</div>
<div class="ab" style="left:1198px;top:553px;width:34px;height:20px;background:#1E9FFF;border-radius:2px;"></div>
<div class="t" style="left:1202px;top:556.6px;font-size:10.8px;color:#fff;letter-spacing:3px;font-weight:bold;">密码</div>
<div class="ab" style="left:1244px;top:553px;width:34px;height:20px;background:#1E9FFF;border-radius:2px;"></div>
<div class="t" style="left:1248px;top:556.6px;font-size:10.8px;color:#fff;letter-spacing:3px;font-weight:bold;">编辑</div>
<div class="ab" style="left:1290px;top:553px;width:34px;height:20px;background:#1E9FFF;border-radius:2px;"></div>
<div class="t" style="left:1294px;top:556.6px;font-size:10.8px;color:#fff;letter-spacing:3px;font-weight:bold;">禁用</div>
<div class="ab" style="left:1336px;top:553px;width:34px;height:20px;background:#FF5722;border-radius:2px;"></div>
<div class="t" style="left:1340px;top:556.6px;font-size:10.8px;color:#fff;letter-spacing:3px;font-weight:bold;">删除</div>
<div class="ab" style="left:209px;top:582.40px;width:1202px;height:36.30px;background:#fff;border-bottom:1px solid #E6E6E6;"></div>
<div class="ab" style="left:222px;top:593px;width:15px;height:14px;border:1px solid #D2D2D2;background:#fff;"></div>
<div class="ab" style="left:264px;top:594.40px;width:12px;height:11px;background:#EFEFEF;"></div>
<div class="ab" style="left:276px;top:594.40px;width:12px;height:11px;background:#E6E6E6;"></div>
<div class="ab" style="left:288px;top:594.40px;width:12px;height:11px;background:#E3E3E3;"></div>
<div class="ab" style="left:300px;top:594.40px;width:12px;height:11px;background:#E6E6E6;"></div>
<div class="ab" style="left:312px;top:594.40px;width:12px;height:11px;background:#E8E8E8;"></div>
<div class="ab" style="left:324px;top:594.40px;width:12px;height:11px;background:#E8E8E8;"></div>
<div class="ab" style="left:372px;top:595.40px;width:12px;height:11px;background:#E8E8E8;"></div>
<div class="t" style="left:481.3px;top:595.70px;font-size:10.8px;color:#555;">--</div>
<div class="t" style="left:559.5px;top:595.70px;font-size:10.8px;color:#555;">网站</div>
<div class="t" style="left:652.6px;top:595.70px;font-size:10.8px;color:#009900;">使用中</div>
<div class="t" style="left:715.5px;top:595.70px;font-size:10.8px;color:#555;letter-spacing:0.14px;">2021年10月27日 14:59:24</div>
<div class="t" style="left:890px;top:595.70px;font-size:10.8px;color:#555;">初级会计师</div>
<div class="ab" style="left:1152px;top:591px;width:34px;height:20px;background:#1E9FFF;border-radius:2px;"></div>
<div class="t" style="left:1156px;top:594.6px;font-size:10.8px;color:#fff;letter-spacing:3px;font-weight:bold;">开课</div>
<div class="ab" style="left:1198px;top:591px;width:34px;height:20px;background:#1E9FFF;border-radius:2px;"></div>
<div class="t" style="left:1202px;top:594.6px;font-size:10.8px;color:#fff;letter-spacing:3px;font-weight:bold;">密码</div>
<div class="ab" style="left:1244px;top:591px;width:34px;height:20px;background:#1E9FFF;border-radius:2px;"></div>
<div class="t" style="left:1248px;top:594.6px;font-size:10.8px;color:#fff;letter-spacing:3px;font-weight:bold;">编辑</div>
<div class="ab" style="left:1290px;top:591px;width:34px;height:20px;background:#1E9FFF;border-radius:2px;"></div>
<div class="t" style="left:1294px;top:594.6px;font-size:10.8px;color:#fff;letter-spacing:3px;font-weight:bold;">禁用</div>
<div class="ab" style="left:1336px;top:591px;width:34px;height:20px;background:#FF5722;border-radius:2px;"></div>
<div class="t" style="left:1340px;top:594.6px;font-size:10.8px;color:#fff;letter-spacing:3px;font-weight:bold;">删除</div>
<div class="ab" style="left:209px;top:619.70px;width:1202px;height:36.30px;background:#fff;border-bottom:1px solid #E6E6E6;"></div>
<div class="ab" style="left:222px;top:631px;width:15px;height:14px;border:1px solid #D2D2D2;background:#fff;"></div>
<div class="ab" style="left:276px;top:632.70px;width:12px;height:12px;background:#D6D6D6;"></div>
<div class="ab" style="left:288px;top:632.70px;width:12px;height:12px;background:#D6D6D6;"></div>
<div class="ab" style="left:300px;top:632.70px;width:12px;height:12px;background:#D9D9D9;"></div>
<div class="ab" style="left:312px;top:632.70px;width:12px;height:12px;background:#D9D9D9;"></div>
<div class="ab" style="left:324px;top:632.70px;width:12px;height:12px;background:#D9D9D9;"></div>
<div class="t" style="left:266px;top:633.00px;font-size:10.8px;color:#888;">1</div>
<div class="ab" style="left:372px;top:632.70px;width:12px;height:12px;background:#D6D6D6;"></div>
<div class="ab" style="left:384px;top:632.70px;width:12px;height:12px;background:#D6D6D6;"></div>
<div class="t" style="left:481.3px;top:633.00px;font-size:10.8px;color:#555;">--</div>
<div class="t" style="left:559.5px;top:633.00px;font-size:10.8px;color:#555;">网站</div>
<div class="t" style="left:652.6px;top:633.00px;font-size:10.8px;color:#009900;">使用中</div>
<div class="t" style="left:715.5px;top:633.00px;font-size:10.8px;color:#555;letter-spacing:0.14px;">2021年10月13日 15:28:28</div>
<div class="ab" style="left:1152px;top:628px;width:34px;height:20px;background:#1E9FFF;border-radius:2px;"></div>
<div class="t" style="left:1156px;top:631.6px;font-size:10.8px;color:#fff;letter-spacing:3px;font-weight:bold;">开课</div>
<div class="ab" style="left:1198px;top:628px;width:34px;height:20px;background:#1E9FFF;border-radius:2px;"></div>
<div class="t" style="left:1202px;top:631.6px;font-size:10.8px;color:#fff;letter-spacing:3px;font-weight:bold;">密码</div>
<div class="ab" style="left:1244px;top:628px;width:34px;height:20px;background:#1E9FFF;border-radius:2px;"></div>
<div class="t" style="left:1248px;top:631.6px;font-size:10.8px;color:#fff;letter-spacing:3px;font-weight:bold;">编辑</div>
<div class="ab" style="left:1290px;top:628px;width:34px;height:20px;background:#1E9FFF;border-radius:2px;"></div>
<div class="t" style="left:1294px;top:631.6px;font-size:10.8px;color:#fff;letter-spacing:3px;font-weight:bold;">禁用</div>
<div class="ab" style="left:1336px;top:628px;width:34px;height:20px;background:#FF5722;border-radius:2px;"></div>
<div class="t" style="left:1340px;top:631.6px;font-size:10.8px;color:#fff;letter-spacing:3px;font-weight:bold;">删除</div>
<div class="ab" style="left:209px;top:657.00px;width:1202px;height:36.30px;background:#fff;border-bottom:1px solid #E6E6E6;"></div>
<div class="ab" style="left:222px;top:668px;width:15px;height:14px;border:1px solid #D2D2D2;background:#fff;"></div>
<div class="ab" style="left:264px;top:670.00px;width:12px;height:11px;background:#E6E6E6;"></div>
<div class="ab" style="left:276px;top:670.00px;width:12px;height:11px;background:#D9D9D9;"></div>
<div class="ab" style="left:288px;top:670.00px;width:12px;height:11px;background:#D9D9D9;"></div>
<div class="ab" style="left:300px;top:670.00px;width:12px;height:11px;background:#DDDDDD;"></div>
<div class="ab" style="left:312px;top:670.00px;width:12px;height:11px;background:#DDDDDD;"></div>
<div class="ab" style="left:324px;top:670.00px;width:12px;height:11px;background:#DDDDDD;"></div>
<div class="ab" style="left:372px;top:670.00px;width:12px;height:11px;background:#D3D3D3;"></div>
<div class="ab" style="left:384px;top:670.00px;width:12px;height:11px;background:#E6E6E6;"></div>
<div class="ab" style="left:396px;top:670.00px;width:12px;height:11px;background:#D6D6D6;"></div>
<div class="t" style="left:481.3px;top:670.30px;font-size:10.8px;color:#555;">--</div>
<div class="t" style="left:559.5px;top:670.30px;font-size:10.8px;color:#555;">网站</div>
<div class="t" style="left:652.6px;top:670.30px;font-size:10.8px;color:#009900;">使用中</div>
<div class="t" style="left:715.5px;top:670.30px;font-size:10.8px;color:#555;letter-spacing:0.14px;">2021年09月19日 18:11:04</div>
<div class="ab" style="left:1152px;top:665px;width:34px;height:20px;background:#1E9FFF;border-radius:2px;"></div>
<div class="t" style="left:1156px;top:668.6px;font-size:10.8px;color:#fff;letter-spacing:3px;font-weight:bold;">开课</div>
<div class="ab" style="left:1198px;top:665px;width:34px;height:20px;background:#1E9FFF;border-radius:2px;"></div>
<div class="t" style="left:1202px;top:668.6px;font-size:10.8px;color:#fff;letter-spacing:3px;font-weight:bold;">密码</div>
<div class="ab" style="left:1244px;top:665px;width:34px;height:20px;background:#1E9FFF;border-radius:2px;"></div>
<div class="t" style="left:1248px;top:668.6px;font-size:10.8px;color:#fff;letter-spacing:3px;font-weight:bold;">编辑</div>
<div class="ab" style="left:1290px;top:665px;width:34px;height:20px;background:#1E9FFF;border-radius:2px;"></div>
<div class="t" style="left:1294px;top:668.6px;font-size:10.8px;color:#fff;letter-spacing:3px;font-weight:bold;">禁用</div>
<div class="ab" style="left:1336px;top:665px;width:34px;height:20px;background:#FF5722;border-radius:2px;"></div>
<div class="t" style="left:1340px;top:668.6px;font-size:10.8px;color:#fff;letter-spacing:3px;font-weight:bold;">删除</div>
<div class="ab" style="left:209px;top:694.30px;width:1202px;height:36.30px;background:#fff;border-bottom:1px solid #E6E6E6;"></div>
<div class="ab" style="left:222px;top:705px;width:15px;height:14px;border:1px solid #D2D2D2;background:#fff;"></div>
<div class="ab" style="left:264px;top:707.30px;width:12px;height:7px;background:#E8E8E8;"></div>
<div class="ab" style="left:276px;top:707.30px;width:12px;height:7px;background:#E3E3E3;"></div>
<div class="ab" style="left:288px;top:707.30px;width:12px;height:7px;background:#DEDEDE;"></div>
<div class="ab" style="left:300px;top:707.30px;width:12px;height:7px;background:#D6D6D6;"></div>
<div class="ab" style="left:312px;top:707.30px;width:12px;height:7px;background:#D9D9D9;"></div>
<div class="ab" style="left:324px;top:707.30px;width:12px;height:7px;background:#E0E0E0;"></div>
<div class="ab" style="left:372px;top:707.30px;width:12px;height:11px;background:#E8E8E8;"></div>
<div class="ab" style="left:384px;top:707.30px;width:12px;height:11px;background:#E6E6E6;"></div>
<div class="ab" style="left:396px;top:707.30px;width:12px;height:11px;background:#E0E0E0;"></div>
<div class="ab" style="left:408px;top:707.30px;width:12px;height:11px;background:#D3D3D3;"></div>
<div class="ab" style="left:420px;top:707.30px;width:12px;height:11px;background:#D3D3D3;"></div>
<div class="ab" style="left:432px;top:707.30px;width:12px;height:11px;background:#D9D9D9;"></div>
<div class="t" style="left:481.3px;top:707.60px;font-size:10.8px;color:#555;">--</div>
<div class="t" style="left:559.5px;top:707.60px;font-size:10.8px;color:#555;">网站</div>
<div class="t" style="left:652.6px;top:707.60px;font-size:10.8px;color:#009900;">使用中</div>
<div class="t" style="left:715.5px;top:707.60px;font-size:10.8px;color:#555;letter-spacing:0.14px;">2021年09月16日 22:09:33</div>
<div class="ab" style="left:1152px;top:703px;width:34px;height:20px;background:#1E9FFF;border-radius:2px;"></div>
<div class="t" style="left:1156px;top:706.6px;font-size:10.8px;color:#fff;letter-spacing:3px;font-weight:bold;">开课</div>
<div class="ab" style="left:1198px;top:703px;width:34px;height:20px;background:#1E9FFF;border-radius:2px;"></div>
<div class="t" style="left:1202px;top:706.6px;font-size:10.8px;color:#fff;letter-spacing:3px;font-weight:bold;">密码</div>
<div class="ab" style="left:1244px;top:703px;width:34px;height:20px;background:#1E9FFF;border-radius:2px;"></div>
<div class="t" style="left:1248px;top:706.6px;font-size:10.8px;color:#fff;letter-spacing:3px;font-weight:bold;">编辑</div>
<div class="ab" style="left:1290px;top:703px;width:34px;height:20px;background:#1E9FFF;border-radius:2px;"></div>
<div class="t" style="left:1294px;top:706.6px;font-size:10.8px;color:#fff;letter-spacing:3px;font-weight:bold;">禁用</div>
<div class="ab" style="left:1336px;top:703px;width:34px;height:20px;background:#FF5722;border-radius:2px;"></div>
<div class="t" style="left:1340px;top:706.6px;font-size:10.8px;color:#fff;letter-spacing:3px;font-weight:bold;">删除</div>
<div class="ab" style="left:209px;top:731.60px;width:1202px;height:36.30px;background:#fff;border-bottom:1px solid #E6E6E6;"></div>
<div class="ab" style="left:222px;top:743px;width:15px;height:14px;border:1px solid #D2D2D2;background:#fff;"></div>
<div class="ab" style="left:276px;top:743.60px;width:12px;height:11px;background:#D3D3D3;"></div>
<div class="ab" style="left:288px;top:743.60px;width:12px;height:11px;background:#D3D3D3;"></div>
<div class="ab" style="left:300px;top:743.60px;width:12px;height:11px;background:#D6D6D6;"></div>
<div class="ab" style="left:312px;top:743.60px;width:12px;height:11px;background:#D6D6D6;"></div>
<div class="ab" style="left:324px;top:743.60px;width:12px;height:11px;background:#D9D9D9;"></div>
<div class="t" style="left:266px;top:744.90px;font-size:10.8px;color:#888;">1</div>
<div class="ab" style="left:372px;top:743.60px;width:12px;height:5px;background:#D2D2D2;"></div>
<div class="t" style="left:481.3px;top:744.90px;font-size:10.8px;color:#555;">--</div>
<div class="t" style="left:559.5px;top:744.90px;font-size:10.8px;color:#555;">网站</div>
<div class="t" style="left:652.6px;top:744.90px;font-size:10.8px;color:#009900;">使用中</div>
<div class="t" style="left:715.5px;top:744.90px;font-size:10.8px;color:#555;letter-spacing:0.14px;">2021年08月31日 02:29:29</div>
<div class="ab" style="left:1152px;top:740px;width:34px;height:20px;background:#1E9FFF;border-radius:2px;"></div>
<div class="t" style="left:1156px;top:743.6px;font-size:10.8px;color:#fff;letter-spacing:3px;font-weight:bold;">开课</div>
<div class="ab" style="left:1198px;top:740px;width:34px;height:20px;background:#1E9FFF;border-radius:2px;"></div>
<div class="t" style="left:1202px;top:743.6px;font-size:10.8px;color:#fff;letter-spacing:3px;font-weight:bold;">密码</div>
<div class="ab" style="left:1244px;top:740px;width:34px;height:20px;background:#1E9FFF;border-radius:2px;"></div>
<div class="t" style="left:1248px;top:743.6px;font-size:10.8px;color:#fff;letter-spacing:3px;font-weight:bold;">编辑</div>
<div class="ab" style="left:1290px;top:740px;width:34px;height:20px;background:#1E9FFF;border-radius:2px;"></div>
<div class="t" style="left:1294px;top:743.6px;font-size:10.8px;color:#fff;letter-spacing:3px;font-weight:bold;">禁用</div>
<div class="ab" style="left:1336px;top:740px;width:34px;height:20px;background:#FF5722;border-radius:2px;"></div>
<div class="t" style="left:1340px;top:743.6px;font-size:10.8px;color:#fff;letter-spacing:3px;font-weight:bold;">删除</div>
<div class="ab" style="left:209px;top:768.90px;width:1202px;height:36.30px;background:#fff;border-bottom:1px solid #E6E6E6;"></div>
<div class="ab" style="left:222px;top:780px;width:15px;height:14px;border:1px solid #D2D2D2;background:#fff;"></div>
<div class="ab" style="left:276px;top:780.90px;width:12px;height:11px;background:#D3D3D3;"></div>
<div class="ab" style="left:288px;top:780.90px;width:12px;height:11px;background:#E3E3E3;"></div>
<div class="ab" style="left:300px;top:780.90px;width:12px;height:11px;background:#DDDDDD;"></div>
<div class="ab" style="left:312px;top:780.90px;width:12px;height:11px;background:#DDDDDD;"></div>
<div class="ab" style="left:324px;top:780.90px;width:12px;height:11px;background:#D6D6D6;"></div>
<div class="ab" style="left:372px;top:780.90px;width:12px;height:12px;background:#DCDCDC;"></div>
<div class="t" style="left:481.3px;top:782.20px;font-size:10.8px;color:#555;">--</div>
<div class="t" style="left:559.5px;top:782.20px;font-size:10.8px;color:#555;">网站</div>
<div class="t" style="left:652.6px;top:782.20px;font-size:10.8px;color:#009900;">使用中</div>
<div class="t" style="left:715.5px;top:782.20px;font-size:10.8px;color:#555;letter-spacing:0.14px;">2021年08月21日 14:13:25</div>
<div class="ab" style="left:1152px;top:777px;width:34px;height:20px;background:#1E9FFF;border-radius:2px;"></div>
<div class="t" style="left:1156px;top:780.6px;font-size:10.8px;color:#fff;letter-spacing:3px;font-weight:bold;">开课</div>
<div class="ab" style="left:1198px;top:777px;width:34px;height:20px;background:#1E9FFF;border-radius:2px;"></div>
<div class="t" style="left:1202px;top:780.6px;font-size:10.8px;color:#fff;letter-spacing:3px;font-weight:bold;">密码</div>
<div class="ab" style="left:1244px;top:777px;width:34px;height:20px;background:#1E9FFF;border-radius:2px;"></div>
<div class="t" style="left:1248px;top:780.6px;font-size:10.8px;color:#fff;letter-spacing:3px;font-weight:bold;">编辑</div>
<div class="ab" style="left:1290px;top:777px;width:34px;height:20px;background:#1E9FFF;border-radius:2px;"></div>
<div class="t" style="left:1294px;top:780.6px;font-size:10.8px;color:#fff;letter-spacing:3px;font-weight:bold;">禁用</div>
<div class="ab" style="left:1336px;top:777px;width:34px;height:20px;background:#FF5722;border-radius:2px;"></div>
<div class="t" style="left:1340px;top:780.6px;font-size:10.8px;color:#fff;letter-spacing:3px;font-weight:bold;">删除</div>
<div class="ab" style="left:0;top:800px;width:1440px;height:1px;background:#E3EAF0;"></div>
</body></html>
